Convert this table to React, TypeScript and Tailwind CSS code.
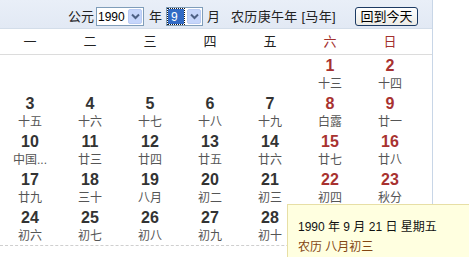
import React from "react";

const weekdays = ["一", "二", "三", "四", "五", "六", "日"];

// null = empty cell before the 1st
const days: ({ d: number; l: string } | null)[] = [
  null, null, null, null, null,
  { d: 1, l: "十三" }, { d: 2, l: "十四" },
  { d: 3, l: "十五" }, { d: 4, l: "十六" }, { d: 5, l: "十七" }, { d: 6, l: "十八" }, { d: 7, l: "十九" }, { d: 8, l: "白露" }, { d: 9, l: "廿一" },
  { d: 10, l: "中国..." }, { d: 11, l: "廿三" }, { d: 12, l: "廿四" }, { d: 13, l: "廿五" }, { d: 14, l: "廿六" }, { d: 15, l: "廿七" }, { d: 16, l: "廿八" },
  { d: 17, l: "廿九" }, { d: 18, l: "三十" }, { d: 19, l: "八月" }, { d: 20, l: "初二" }, { d: 21, l: "初三" }, { d: 22, l: "初四" }, { d: 23, l: "秋分" },
  { d: 24, l: "初六" }, { d: 25, l: "初七" }, { d: 26, l: "初八" }, { d: 27, l: "初九" }, { d: 28, l: "初十" }, null, null,
];

function Chevron() {
  return (
    <svg width="9" height="7" viewBox="0 0 9 7">
      <path d="M1 1.5 L4.5 5 L8 1.5" fill="none" stroke="#4d6185" strokeWidth="2" />
    </svg>
  );
}

function FakeSelect({ value, focused }: { value: string; focused?: boolean }) {
  return (
    <div className={focused ? "flex h-[19px] w-[37px] border border-[#7f9db9] bg-white" : "flex h-[19px] w-[48px] border border-[#7f9db9] bg-white"}>
      <div className="flex flex-1 items-center pl-[1px]">
        {focused ? (
          <span className="flex h-[15px] w-[16px] items-center bg-[#316ac5] pl-[3px] text-[12px] leading-none text-white outline outline-1 outline-dotted outline-[#1a1a1a]">
            {value}
          </span>
        ) : (
          <span className="text-[12px] leading-none text-black">{value}</span>
        )}
      </div>
      <div className="m-[1px] flex w-[14px] items-center justify-center rounded-[2px] border border-[#b9cbf3] bg-[#c6d6fb]">
        <Chevron />
      </div>
    </div>
  );
}

export default function App() {
  return (
    <div
      className="relative h-[257px] w-[469px] overflow-hidden bg-white"
      style={{ fontFamily: '"Liberation Sans", "Noto Sans CJK SC", sans-serif' }}
    >
      <div className="w-[433px] border-r border-[#c8d6e7]">
        {/* top bar */}
        <div className="flex h-[29px] items-start border-b border-[#d3dde9] bg-gradient-to-b from-[#e9eff8] to-[#e2e9f4] pt-[7px] pl-[68px] text-[13px] leading-[19px] text-[#222]">
          <span>公元</span>
          <div className="ml-[2px]">
            <FakeSelect value="1990" />
          </div>
          <span className="ml-[5px]">年</span>
          <div className="ml-[4px]">
            <FakeSelect value="9" focused />
          </div>
          <span className="ml-[4px]">月</span>
          <span className="ml-[11px] tracking-[0.3px]">农历庚午年 [马年]</span>
          <button className="ml-[19px] h-[19px] w-[63px] rounded-[3px] border border-[#1c3a63] bg-gradient-to-b from-white to-[#ecebe6] text-[13px] leading-[17px] text-black">
            回到今天
          </button>
        </div>

        {/* weekday row */}
        <div className="grid h-[26px] grid-cols-[repeat(7,60px)] items-center border-b border-[#dcdcdc] text-[13px]">
          {weekdays.map((w, i) => (
            <div key={w} className={i >= 5 ? "text-center text-[#a3302d]" : "text-center text-[#222]"}>
              {w}
            </div>
          ))}
        </div>

        {/* days */}
        <div className="grid w-[420px] grid-cols-[repeat(7,60px)] border-b border-dashed border-[#cfcfcf]">
          {days.map((c, i) =>
            c ? (
              <div key={i} className="h-[38px] pt-[2px] text-center">
                <div className={i % 7 >= 5 ? "text-[16px] font-bold leading-[18px] text-[#a83230]" : "text-[16px] font-bold leading-[18px] text-[#333]"}>
                  {c.d}
                </div>
                <div className="text-[12px] leading-[18px] text-[#555]">{c.l}</div>
              </div>
            ) : (
              <div key={i} className="h-[38px]" />
            )
          )}
        </div>
      </div>

      {/* hover tip */}
      <div className="absolute left-[287px] top-[204px] h-[70px] w-[200px] border border-[#e7dfa6] bg-[#ffffe0] pl-[10px] pt-[12px] text-[12px] leading-[20px]">
        <div className="text-[#111]">1990 年 9 月 21 日 星期五</div>
        <div className="text-[#834612]">农历 八月初三</div>
      </div>
    </div>
  );
}
